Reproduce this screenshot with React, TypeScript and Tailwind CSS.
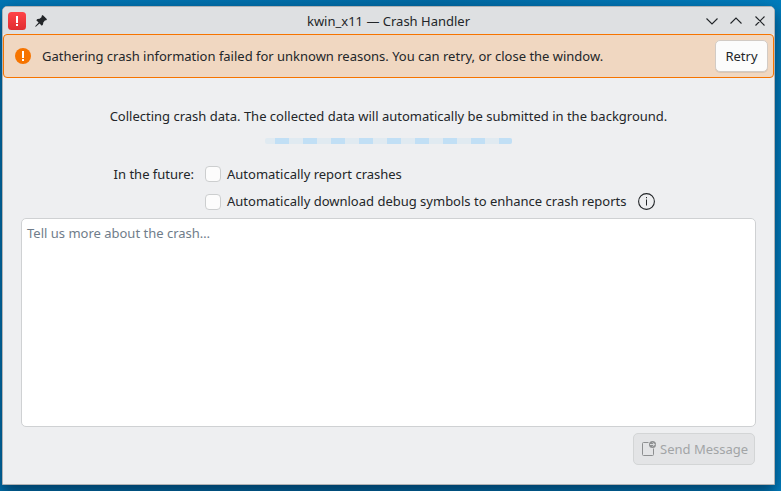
import React from "react";

const stripes = [275, 303, 331, 359, 387, 415, 443, 471, 499];

function TitleBar() {
  return (
    <header className="flex h-[27px] shrink-0 items-center bg-[#dee0e2] pl-[5px] pr-[8px]">
      <svg width="18" height="18" viewBox="0 0 18 18" className="shrink-0">
        <defs>
          <linearGradient id="alert" x1="0" y1="0" x2="0" y2="1">
            <stop offset="0" stopColor="#ff4447" />
            <stop offset="1" stopColor="#e02d31" />
          </linearGradient>
        </defs>
        <rect width="18" height="18" rx="3.5" fill="url(#alert)" />
        <path d="M8 4h2v7H8zM8 12h2v2H8z" fill="#fff" />
      </svg>
      <svg width="12" height="12" viewBox="0 0 12 12" className="ml-[9px] shrink-0" fill="#232629">
        <path d="M7.700 0 12 4.300 11 5.500 10.100 5.300 8.300 7.400 8 9.600 6.800 10.700 4.500 8.400 1.100 11.600.2 11.800.4 10.900 3.600 7.500 1.300 5.200 2.400 4 4.600 3.700 6.700 1.900 6.500 1z" />
      </svg>
      <h1 className="min-w-0 flex-1 pl-[24px] text-center">
        <span>kwin_x11 — Crash Handler</span>
      </h1>
      <svg width="60" height="12" viewBox="0 0 60 12" fill="none" stroke="#232629" strokeWidth="1.1" className="shrink-0">
        <path d="M.5 3.500 6 9l5.500-5.500M24.500 8.500 30 3l5.500 5.500M49.500 1.500l9 9M58.500 1.500l-9 9" />
      </svg>
    </header>
  );
}

function Check({ label, raised = false }: { label: string; raised?: boolean }) {
  return (
    <label className="flex h-4 items-center">
      <input
        type="checkbox"
        className="h-4 w-4 shrink-0 appearance-none rounded-[4px] border border-[#cccecf] bg-[#fcfcfc]"
      />
      <span className={raised ? "ml-[6px] whitespace-nowrap pb-[2px]" : "ml-[6px] whitespace-nowrap"}>{label}</span>
    </label>
  );
}

export default function App() {
  return (
    <div className="h-[491px] w-[781px] overflow-hidden bg-[linear-gradient(100deg,#0077b5_0%,#006ba5_50%,#0082c4_100%)] pl-[2px] pt-[6px] font-['Noto_Sans',sans-serif] text-[13px] leading-[18px] text-[#232629]">
      <main className="flex h-[479px] w-[773px] flex-col overflow-hidden rounded-t-[5px] border border-[#b0b2b4] bg-[#eeeff1] shadow-[0_7px_16px_1px_rgba(0,25,50,0.6)]">
        <TitleBar />
        <section className="flex h-[44px] shrink-0 items-center rounded-[4px] border border-[#f67400] bg-[#f0d7c1] pl-[11px] pr-[5px]">
          <svg width="16" height="16" viewBox="0 0 16 16" className="shrink-0">
            <circle cx="8" cy="8" r="8" fill="#f67400" />
            <path d="M7 3h2v7H7zM7 11h2v2H7z" fill="#fff" />
          </svg>
          <p className="ml-[11px] flex-1 whitespace-nowrap tracking-[-0.008px]">
            Gathering crash information failed for unknown reasons. You can retry, or close the window.
          </p>
          <button className="h-8 w-[53px] rounded-[5px] border border-[#d2cbc5] bg-[#fcfcfc] shadow-[0_1px_0_rgba(0,0,0,0.08)]">
            Retry
          </button>
        </section>

        <div className="flex flex-1 flex-col px-[18px] pt-[29px]">
          <p className="whitespace-nowrap text-center">
            Collecting crash data. The collected data will automatically be submitted in the background.
          </p>
          <div className="ml-[244px] mt-[13px] flex h-[6px] w-[247px] shrink-0 overflow-hidden rounded-[2px] bg-[#e0eaf1] pl-[10px]">
            {stripes.map((x) => (
              <div key={x} className="mr-[14px] w-[14px] shrink-0 bg-[#c1dff5]" />
            ))}
          </div>
          <div className="mt-[22px] flex">
            <div className="flex h-4 w-[184px] shrink-0 items-center justify-end pr-[11px]">
              <span className="whitespace-nowrap">In the future:</span>
            </div>
            <div className="flex flex-col gap-3">
              <Check label="Automatically report crashes" />
              <div className="flex h-4 items-center">
                <Check raised label="Automatically download debug symbols to enhance crash reports" />
                <svg width="17" height="17" viewBox="0 0 17 17" className="mb-px ml-[12px] shrink-0">
                  <circle cx="8.5" cy="8.5" r="7.900" fill="none" stroke="#232629" strokeWidth="1.1" />
                  <path d="M8 4h1v1.200h-1zM8 6.500h1v6h-1z" fill="#232629" />
                </svg>
              </div>
            </div>
          </div>
          <textarea
            placeholder="Tell us more about the crash…"
            className="mt-[8px] block h-[209px] w-[735px] shrink-0 resize-none rounded-[5px] border border-[#cfd1d3] bg-white px-[5px] py-[5px] placeholder:text-[#707d8a] placeholder:opacity-100"
          />
          <button
            disabled
            className="mr-px mt-[6px] flex h-8 w-[122px] shrink-0 items-center self-end rounded-[5px] border border-[#d3d5d6] bg-[#e3e4e6] pl-[8px] text-[#a2a4a6]"
          >
            <svg width="15" height="16" viewBox="0 0 15 16" fill="none" stroke="#8d8f91" className="shrink-0">
              <path d="M6.500 1.500h-5a1 1 0 0 0-1 1v11a1 1 0 0 0 1 1h9a1 1 0 0 0 1-1V7.500" />
              <circle cx="10.500" cy="3.500" r="3.500" fill="#8d8f91" stroke="none" />
              <path d="M8 3.500h4.500M10.700 1.500l2 2-2 2" stroke="#e3e4e6" strokeWidth="0.9" />
            </svg>
            <span className="ml-[3px] whitespace-nowrap">Send Message</span>
          </button>
        </div>
      </main>
    </div>
  );
}
